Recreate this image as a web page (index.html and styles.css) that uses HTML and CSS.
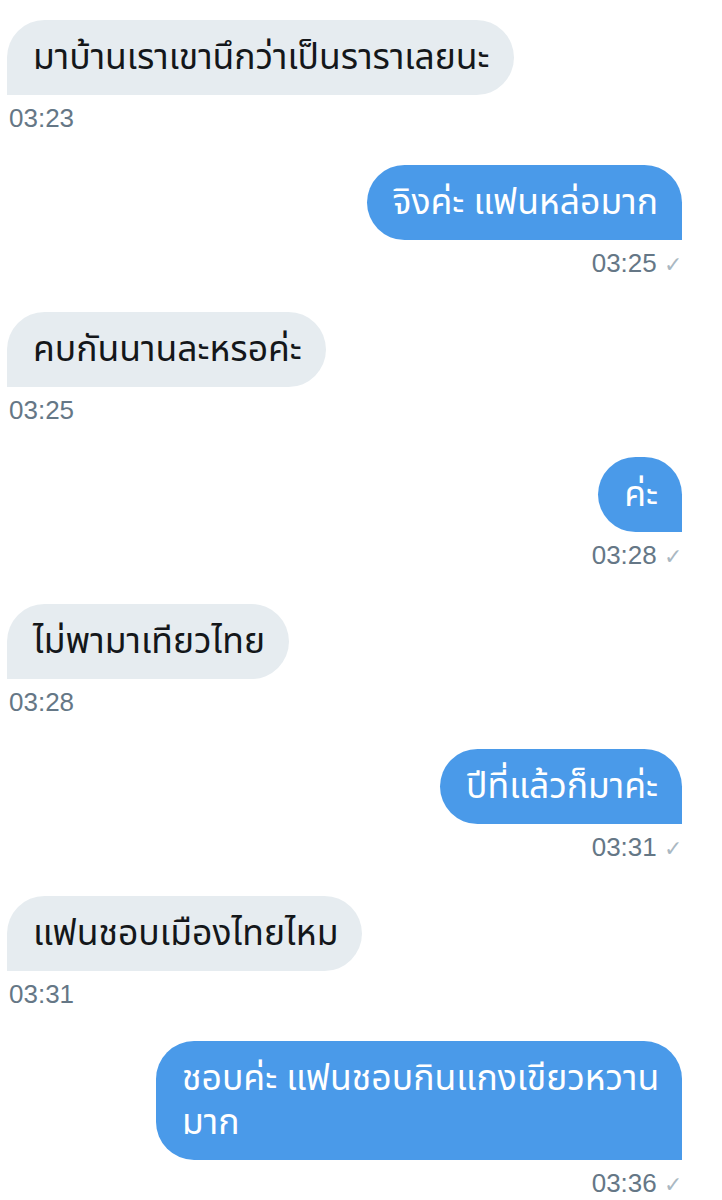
FILE: index.html
```html
<!DOCTYPE html>
<html lang="th">
<head>
<meta charset="utf-8">
<link rel="stylesheet" href="styles.css">
</head>
<body>
<div class="chat">
  <div class="msg in">
    <div class="bubble">มาบ้านเราเขานึกว่าเป็นราราเลยนะ</div>
    <div class="meta">03:23</div>
  </div>
  <div class="msg out">
    <div class="bubble">จิงค่ะ แฟนหล่อมาก</div>
    <div class="meta">03:25 <span class="check">✓</span></div>
  </div>
  <div class="msg in">
    <div class="bubble">คบกันนานละหรอค่ะ</div>
    <div class="meta">03:25</div>
  </div>
  <div class="msg out">
    <div class="bubble">ค่ะ</div>
    <div class="meta">03:28 <span class="check">✓</span></div>
  </div>
  <div class="msg in">
    <div class="bubble">ไม่พามาเทียวไทย</div>
    <div class="meta">03:28</div>
  </div>
  <div class="msg out">
    <div class="bubble">ปีที่แล้วก็มาค่ะ</div>
    <div class="meta">03:31 <span class="check">✓</span></div>
  </div>
  <div class="msg in">
    <div class="bubble">แฟนชอบเมืองไทยไหม</div>
    <div class="meta">03:31</div>
  </div>
  <div class="msg out">
    <div class="bubble"><span class="nowrap">ชอบค่ะ แฟนชอบกินแกงเขียวหวาน</span> มาก</div>
    <div class="meta">03:36 <span class="check">✓</span></div>
  </div>
</div>
</body>
</html>
```

FILE: styles.css
```css
html, body {
  margin: 0;
  padding: 0;
  background: #ffffff;
}
body {
  font-family: "Noto Sans Thai", "Noto Sans", "Liberation Sans", sans-serif;
}
.chat {
  display: flex;
  flex-direction: column;
  gap: 32px;
  padding: 20px 40px 0 7px;
}
.msg {
  display: flex;
  flex-direction: column;
}
.msg.in { align-items: flex-start; }
.msg.out { align-items: flex-end; }
.bubble {
  box-sizing: border-box;
  font-size: 35.5px;
  line-height: 44px;
  padding: 16px 24px 15px 26px;
  border-radius: 38px;
  max-width: 526px;
}
.nowrap {
  white-space: nowrap;
}
.msg.in .bubble {
  background: #e6ecf0;
  color: #14171a;
  border-bottom-left-radius: 0;
}
.msg.out .bubble {
  background: #4a9ae9;
  color: #ffffff;
  border-bottom-right-radius: 0;
}
.meta {
  margin-top: 8px;
  font-family: "Liberation Sans", sans-serif;
  font-size: 26px;
  line-height: 30px;
  color: #657786;
  padding-left: 2px;
}
.check {
  color: #aab8c2;
  font-size: 22px;
}
```
